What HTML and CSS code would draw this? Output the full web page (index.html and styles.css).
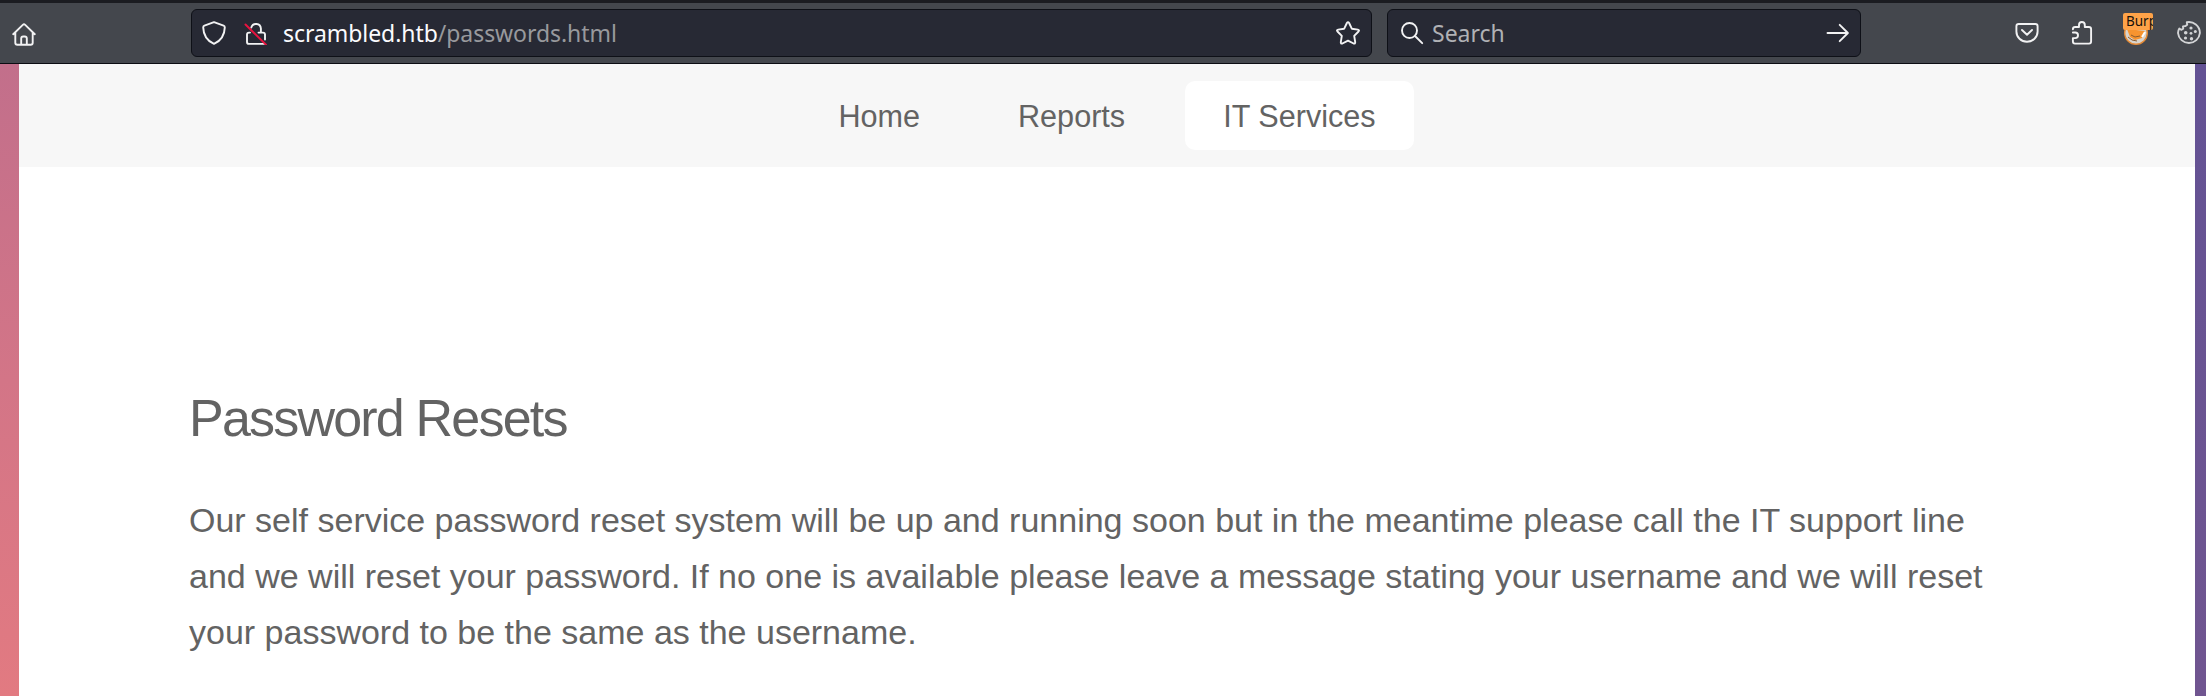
FILE: index.html
```html
<!DOCTYPE html>
<html lang="en">
<head>
<meta charset="utf-8">
<title>Password Resets</title>
<link rel="stylesheet" href="styles.css">
</head>
<body>
<header class="toolbar">
  <svg class="icon home" viewBox="0 0 24 24"><path d="M1.2 12.2 10.8 2.9q1.2-1.1 2.400 0l9.600 9.300M3.300 10.400v10.300q0 2 2 2h13.400q2 0 2-2V10.400M9.200 22.500v-6q0-2 2-2h1.600q2 0 2 2v6"/></svg>
  <div class="field url">
    <svg class="icon shield" viewBox="0 0 24 24"><path d="M12 1.200 21.600 4.600q1.200.5 1.200 1.800C22.600 13.500 19 19.800 12 22.900 5 19.800 1.400 13.500 1.200 6.400q0-1.300 1.200-1.800z"/></svg>
    <svg class="icon lock" viewBox="0 0 24 24"><path d="M7.300 6.500a4.900 4.900 0 0 1 9.600 1v4M14.500 11.600h4.500q2 0 2 2v5M6 11.600H5q-2 0-2 2v7.300q0 2 2 2h15"/><path class="slash" d="M1.500 3.500 22 23.600"/></svg>
    <span class="address">scrambled.htb<span class="path">/passwords.html</span></span>
    <svg class="icon star" viewBox="0 0 24 24"><path d="M10.900 2q1.100-1.700 2.200 0l2.700 5.700 6 .9q2 .4.700 1.900l-4.300 4.400 1 6.200q.1 2-1.600 1.400L12 19.600l-5.600 2.900q-1.700.6-1.600-1.400l1-6.200-4.300-4.400Q.2 9 2.200 8.600l6-.9z"/></svg>
  </div>
  <div class="field search">
    <svg class="icon lens" viewBox="0 0 24 24"><circle cx="9.500" cy="9.500" r="7.500"/><path d="m15 15 7.200 7.200"/></svg>
    <span class="placeholder">Search</span>
    <svg class="icon arrow" viewBox="0 0 24 24"><path d="M1.500 12h20M13.700 3.800l8.200 8.200-8.200 8.200"/></svg>
  </div>
  <div class="actions">
    <svg class="icon" viewBox="0 0 24 24"><path d="M3.700 3h16.600q2.300 0 2.300 2.300v5.200a10.600 10.200 0 0 1-21.200 0V5.300Q1.400 3 3.700 3zM7 9l5 4.700L17 9"/></svg>
    <svg class="icon" viewBox="0 0 24 24"><path d="M2.900 8.300q0-2.300 2.300-2.300H9V3.900a2.900 2.900 0 0 1 5.800 0V6h4q2.300 0 2.300 2.300v12.300q0 2-2 2H4.900q-2 0-2-2v-3.500h2.300a2.700 2.700 0 0 0 0-5.600H2.900"/></svg>
    <div class="burp">
      <svg class="fox" viewBox="0 0 24 24"><circle cx="12" cy="12" r="11.300" fill="#d9d4cc" stroke="#e58a35" stroke-width="1.400"/><path d="M3 8l3 8 5 3 7-2 3-7z" fill="#f7942f"/><path d="m7 14 4 2 5-1M4 16l4 3 5 1" stroke="#8b5a2c" stroke-width="1" fill="none"/><path d="m18 16 3-5" stroke="#fff" stroke-width="2"/></svg>
      <span class="badge">Burp</span>
    </div>
    <svg class="icon cookie" viewBox="0 0 24 24"><path d="M9.800 1.300A11 11 0 0 1 22.900 12a11 11 0 0 1-21.900 0q0-2.500 1.300-4.500l1.900 1.300 2-1.100-.2-2.300 2.500-.4 1.700-1.300z"/><g class="chips"><circle cx="14" cy="7" r="1.600"/><circle cx="8.700" cy="11.700" r="1.800"/><circle cx="14" cy="12.300" r="1.400"/><circle cx="18.300" cy="10.500" r="1.500"/><circle cx="8.500" cy="17" r="1.600"/><circle cx="14.500" cy="17.700" r="1.700"/></g></svg>
  </div>
</header>
<div class="backdrop">
  <div class="page">
    <nav class="nav">
      <a class="link">Home</a>
      <a class="link">Reports</a>
      <a class="link current">IT Services</a>
    </nav>
    <main class="content">
      <h2 class="title">Password Resets</h2>
      <p class="text"><span class="line">Our self service password reset system will be up and running soon but in the meantime please call the IT support line</span> <span class="line">and we will reset your password. If no one is available please leave a message stating your username and we will reset</span> <span class="line">your password to be the same as the username.</span></p>
    </main>
  </div>
</div>
</body>
</html>
```
FILE: styles.css
```css
* { box-sizing: border-box; }
body {
  margin: 0;
  height: 696px;
  overflow: hidden;
  display: flex;
  flex-direction: column;
  background: #fff;
  font-family: "Liberation Sans", Arial, sans-serif;
  color: #636363;
}
.toolbar {
  flex: none;
  height: 64px;
  display: flex;
  align-items: center;
  background: #44474d;
  border-top: 3px solid #1b1c21;
  border-bottom: 1px solid #0b0c12;
  font-family: "Noto Sans", "Open Sans", sans-serif;
  font-size: 23px;
}
.icon {
  flex: none;
  width: 24px;
  height: 24px;
  fill: none;
  stroke: #f2f2f3;
  stroke-width: 1.9;
  stroke-linecap: round;
  stroke-linejoin: round;
}
.home { margin: 1px 0 0 12px; }
.field {
  flex: none;
  height: 48px;
  display: flex;
  align-items: center;
  background: #272934;
  border: 1px solid #0e1017;
  border-radius: 6px;
}
.url { width: 1181px; margin-left: 155px; padding: 0 11px 0 10px; }
.lock { margin-left: 18px; }
.slash { stroke: #e8123f; stroke-width: 2; }
.address { margin-left: 15px; color: #fbfbfe; white-space: nowrap; letter-spacing: -.06px; }
.path { color: #98999d; }
.star { margin-left: auto; }
.search { width: 474px; margin-left: 15px; padding: 0 10px 0 12px; }
.placeholder { margin-left: 8px; color: #b0b1b5; }
.arrow { margin-left: auto; }
.actions { display: flex; align-items: center; margin-left: 154px; gap: 31px; }
.burp { position: relative; width: 24px; height: 24px; margin-left: -1px; }
.fox { display: block; width: 24px; height: 24px; }
.badge {
  position: absolute;
  left: -1px;
  top: -8px;
  width: 30px;
  height: 17px;
  padding-left: 3px;
  overflow: hidden;
  background: #ffa348;
  border-radius: 2px;
  color: #17120c;
  font-size: 13.5px;
  line-height: 16px;
}
.cookie { stroke: #d3d4d6; margin-left: -2px; }
.chips { fill: #d3d4d6; stroke: none; }
.backdrop {
  flex: 1;
  padding: 0 11px 0 19px;
  background: linear-gradient(#c26f8b, #d37587 50%, #e27a81) left / 19px 100% no-repeat, linear-gradient(#635294, #705590) right / 11px 100% no-repeat;
}
.page { height: 100%; background: #fff; }
.nav {
  height: 103px;
  display: flex;
  justify-content: center;
  align-items: center;
  gap: 21px;
  background: #f7f7f7;
}
.link {
  height: 69px;
  padding: 0 38.5px;
  font-size: 30.6px;
  line-height: 71px;
  border-radius: 10px;
}
.current { background: #fff; }
.content { padding: 219px 170px 0; }
.title {
  margin: 0;
  font-size: 52px;
  line-height: 64px;
  font-weight: 400;
  letter-spacing: -1.8px;
}
.text { margin: 42px 0 0; font-size: 34px; line-height: 56px; white-space: nowrap; }
.line { display: block; }
```
